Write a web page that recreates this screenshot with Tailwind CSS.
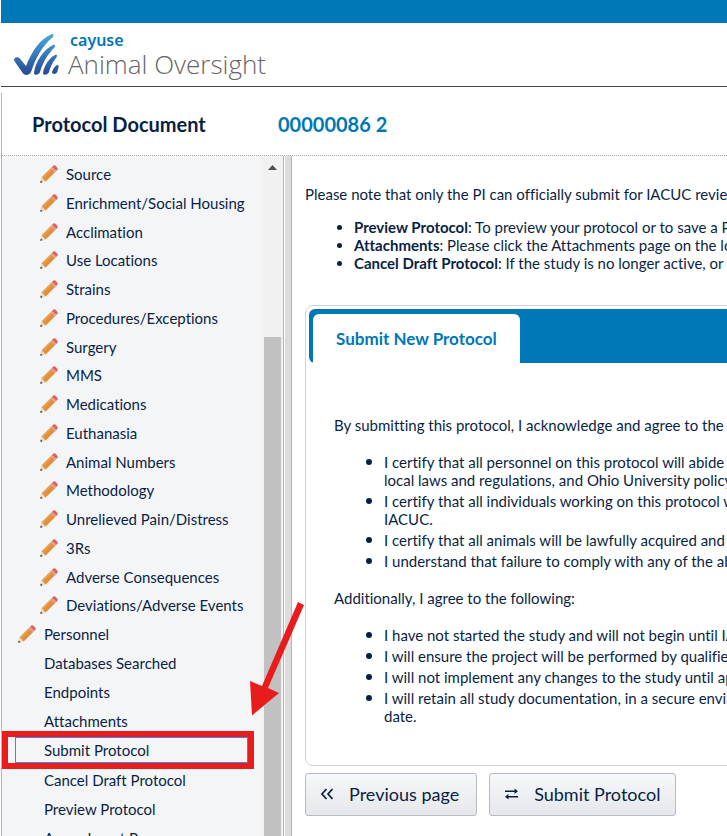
<!DOCTYPE html>
<html lang="en">
<head>
  <meta charset="UTF-8">
  <meta name="viewport" content="width=device-width, initial-scale=1.0">
  <title>Cayuse Animal Oversight</title>
  <script src="https://cdn.jsdelivr.net/npm/@tailwindcss/browser@4"></script>
</head>
<body class="h-screen overflow-hidden flex flex-col pl-px bg-white font-['Lato',sans-serif] [font-variant-ligatures:none] text-[15px] leading-[18px] text-[#0a1f44]">

  <!-- Shared icons -->
  <svg class="absolute size-0">
    <defs>
      <linearGradient id="wood" x1="0" y1="0" x2="1" y2="1">
        <stop offset="0.35" stop-color="#eba558" />
        <stop offset="0.5" stop-color="#e0903c" />
      </linearGradient>
      <linearGradient id="brand" x1="0" y1="0" x2="0" y2="42" gradientUnits="userSpaceOnUse">
        <stop offset="0" stop-color="#48aee6" />
        <stop offset="1" stop-color="#2a4b93" />
      </linearGradient>
    </defs>
    <symbol id="pencil" viewBox="0 0 18 18">
      <path d="M0.2 17.8 L1.4 12.3 L5.7 16.6 Z" fill="#f1d9bd" />
      <path d="M0.2 17.8 L0.8 15.4 L2.6 17.2 Z" fill="#333" />
      <path d="M1.4 12.3 L10.7 3 L15 7.3 L5.7 16.6 Z" fill="url(#wood)" />
      <path d="M10.7 3 L12 1.700 L16.3 6 L15 7.3 Z" fill="#d99a90" />
      <path d="M12 1.700 L13.4 0.500 Q14.4 0 15.200 0.6 L17.4 2.8 Q18 3.6 17.5 4.6 L16.3 6 Z" fill="#e2605c" />
    </symbol>
  </svg>

  <div class="h-[23px] shrink-0 bg-[#0077b6]"></div>

  <header class="h-16 shrink-0 flex items-start pl-3 pt-2 gap-2 border-b border-[#484848]">
    <svg class="w-[46px] h-[46px] mt-px" viewBox="0 0 46 46" fill="url(#brand)">
      <path d="M1 28 C1 25 6 24 8 28 L13 34 C19 19 27 7 39 2 C41 2 41 4 39 6 C30 13 23 25 18 40 C16 44 11 44 9 40 L2 30 Z" />
      <path d="M21 41 C22 30 31 17 40 13 C43 12 42 15 41 16 C35 22 30 30 27 40 C26 43 21 44 21 41 Z" />
      <path d="M30 41 C31 34 36 26 42 23 C45 22 44 25 43 26 C39 31 37 36 36 40 C35 43 30 44 30 41 Z" />
      <path d="M39 41 C39 38 42 34 44 33 C46 33 46 35 45 37 C45 40 43 42 41 42 Z" />
    </svg>
    <div>
      <div class="font-['Noto_Sans',sans-serif] font-semibold text-base leading-[18px] pl-[3px] text-[#0077b6]">cayuse</div>
      <div class="font-['Open_Sans',sans-serif] font-light text-[26px] leading-[30px] pl-px text-[#666]">Animal Oversight</div>
    </div>
  </header>

  <div class="flex-1 min-h-0 mt-[6px] flex flex-col border-l border-[#b5b5b5]">
    <div class="h-[63px] shrink-0 flex items-center pl-[30px] text-xl font-bold border-b border-dotted border-[#aaa]">
      <h1 class="w-[246px]">Protocol Document</h1>
      <span class="text-[#0077b6]">00000086 2</span>
    </div>

    <div class="flex-1 min-h-0 flex">
      <!-- Sections -->
      <nav class="w-[260px] shrink-0 bg-[#f4f5f7] pt-[3px]">
        <ul>
          <li>
            <ul class="*:h-[29px] *:nth-[4n]:h-7">
              <li><a href="#" class="flex items-center h-full pl-[38px] gap-2"><svg class="size-[18px]"><use href="#pencil" /></svg>Source</a></li>
              <li><a href="#" class="flex items-center h-full pl-[38px] gap-2"><svg class="size-[18px]"><use href="#pencil" /></svg>Enrichment/Social Housing</a></li>
              <li><a href="#" class="flex items-center h-full pl-[38px] gap-2"><svg class="size-[18px]"><use href="#pencil" /></svg>Acclimation</a></li>
              <li><a href="#" class="flex items-center h-full pl-[38px] gap-2"><svg class="size-[18px]"><use href="#pencil" /></svg>Use Locations</a></li>
              <li><a href="#" class="flex items-center h-full pl-[38px] gap-2"><svg class="size-[18px]"><use href="#pencil" /></svg>Strains</a></li>
              <li><a href="#" class="flex items-center h-full pl-[38px] gap-2"><svg class="size-[18px]"><use href="#pencil" /></svg>Procedures/Exceptions</a></li>
              <li><a href="#" class="flex items-center h-full pl-[38px] gap-2"><svg class="size-[18px]"><use href="#pencil" /></svg>Surgery</a></li>
              <li><a href="#" class="flex items-center h-full pl-[38px] gap-2"><svg class="size-[18px]"><use href="#pencil" /></svg>MMS</a></li>
              <li><a href="#" class="flex items-center h-full pl-[38px] gap-2"><svg class="size-[18px]"><use href="#pencil" /></svg>Medications</a></li>
              <li><a href="#" class="flex items-center h-full pl-[38px] gap-2"><svg class="size-[18px]"><use href="#pencil" /></svg>Euthanasia</a></li>
              <li><a href="#" class="flex items-center h-full pl-[38px] gap-2"><svg class="size-[18px]"><use href="#pencil" /></svg>Animal Numbers</a></li>
              <li><a href="#" class="flex items-center h-full pl-[38px] gap-2"><svg class="size-[18px]"><use href="#pencil" /></svg>Methodology</a></li>
              <li><a href="#" class="flex items-center h-full pl-[38px] gap-2"><svg class="size-[18px]"><use href="#pencil" /></svg>Unrelieved Pain/Distress</a></li>
              <li><a href="#" class="flex items-center h-full pl-[38px] gap-2"><svg class="size-[18px]"><use href="#pencil" /></svg>3Rs</a></li>
              <li><a href="#" class="flex items-center h-full pl-[38px] gap-2"><svg class="size-[18px]"><use href="#pencil" /></svg>Adverse Consequences</a></li>
              <li><a href="#" class="flex items-center h-full pl-[38px] gap-2"><svg class="size-[18px]"><use href="#pencil" /></svg>Deviations/Adverse Events</a></li>
            </ul>
          </li>
          <li><a href="#" class="flex items-center h-[29px] pl-4 gap-2"><svg class="size-[18px]"><use href="#pencil" /></svg>Personnel</a></li>
          <li><a href="#" class="flex items-center h-[29px] pl-[42px]">Databases Searched</a></li>
          <li><a href="#" class="flex items-center h-[29px] pl-[42px]">Endpoints</a></li>
          <li><a href="#" class="flex items-center h-[29px] pl-[42px]">Attachments</a></li>
          <li class="relative py-[2px] pl-[13px] pr-[14px]">
            <a href="#" class="flex items-center h-[26px] pl-7 border border-[#4285e8]">Submit Protocol</a>
            <!-- Callout -->
            <div class="absolute left-0 -top-1 w-[252px] h-[38px] border-[6px] border-[#e81c1c]"></div>
            <svg class="absolute left-[246px] -top-[135px] z-10 w-[60px] h-[116px]" viewBox="248 600 60 116" fill="#e81c1c">
              <path d="M298 602 L304 605 L268 688 L279 693 L252 715.500 L250 681 L262 686 Z" />
            </svg>
          </li>
          <li><a href="#" class="flex items-center h-[29px] pl-[42px]">Cancel Draft Protocol</a></li>
          <li><a href="#" class="flex items-center h-[29px] pl-[42px]">Preview Protocol</a></li>
          <li><a href="#" class="flex items-center h-[29px] pl-[42px]">Amendment Process</a></li>
        </ul>
      </nav>

      <!-- Scrollbar -->
      <div class="w-[22px] shrink-0 flex flex-col items-center bg-[#f1f1f1] border-r border-[#b5b5b5] px-[2px]">
        <svg class="w-[9px] h-[5px] mt-[9px] mb-[167px] shrink-0" viewBox="0 0 9 5"><path d="M0 5 L4.500 0 L9 5 Z" fill="#505050" /></svg>
        <div class="w-full flex-1 bg-[#c1c1c1]"></div>
      </div>
      <div class="w-[7px] shrink-0 ml-px bg-[#dcdcdc] border-r border-[#b5b5b5]"></div>

      <main class="flex-1 min-w-0 overflow-hidden pl-[13px] pt-[29px] whitespace-nowrap">
        <p>Please note that only the PI can officially submit for IACUC review</p>
        <ul class="list-disc pl-[49px] mt-[15px]">
          <li><b>Preview Protocol</b>: To preview your protocol or to save a PDF</li>
          <li><b>Attachments</b>: Please click the Attachments page on the lower</li>
          <li><b>Cancel Draft Protocol</b>: If the study is no longer active, or should</li>
        </ul>

        <section class="w-[150%] mt-[33px] p-[3px] pb-[37px] border border-[#d3d3d3] rounded-lg">
          <div class="h-[54px] flex pl-1 pt-[5px] bg-[#0077b6] rounded-md">
            <button type="button" class="px-[23px] bg-white rounded-t-md text-[17px] font-bold text-[#0077b6]">Submit New Protocol</button>
          </div>
          <div class="pl-[25px] pt-[53px]">
            <p>By submitting this protocol, I acknowledge and agree to the following:</p>
            <ul class="mt-[19px] pl-8 *:flex *:gap-3 *:mb-[3px]">
              <li><span class="size-[6px] mt-[6px] rounded-full bg-[#0a1f44]"></span><span>I certify that all personnel on this protocol will abide by<br>local laws and regulations, and Ohio University policy</span></li>
              <li><span class="size-[6px] mt-[6px] rounded-full bg-[#0a1f44]"></span><span>I certify that all individuals working on this protocol will<br>IACUC.</span></li>
              <li><span class="size-[6px] mt-[6px] rounded-full bg-[#0a1f44]"></span><span>I certify that all animals will be lawfully acquired and that</span></li>
              <li><span class="size-[6px] mt-[6px] rounded-full bg-[#0a1f44]"></span><span>I understand that failure to comply with any of the above</span></li>
            </ul>
            <p class="mt-[19px]">Additionally, I agree to the following:</p>
            <ul class="mt-[19px] pl-8 *:flex *:gap-3 *:mb-[3px]">
              <li><span class="size-[6px] mt-[6px] rounded-full bg-[#0a1f44]"></span><span>I have not started the study and will not begin until IACUC</span></li>
              <li><span class="size-[6px] mt-[6px] rounded-full bg-[#0a1f44]"></span><span>I will ensure the project will be performed by qualified</span></li>
              <li><span class="size-[6px] mt-[6px] rounded-full bg-[#0a1f44]"></span><span>I will not implement any changes to the study until approved</span></li>
              <li><span class="size-[6px] mt-[6px] rounded-full bg-[#0a1f44]"></span><span>I will retain all study documentation, in a secure environment<br>date.</span></li>
            </ul>
          </div>
        </section>

        <div class="flex gap-3 mt-[7px] text-lg">
          <button type="button" class="h-[43px] flex items-center gap-4 pl-[15px] pr-[17px] pb-px border border-[#b9bac4] rounded-[3px] bg-linear-to-b from-[#f7f8fa] to-[#e6e7ec]">
            <svg class="size-3" viewBox="0 0 12 12" fill="none" stroke="#0a1f44" stroke-width="1.700"><path d="M5.500 1 L1 6 L5.500 11 M11.500 1 L7 6 L11.500 11" /></svg>
            Previous page
          </button>
          <button type="button" class="h-[43px] flex items-center gap-4 px-[15px] pb-px border border-[#b9bac4] rounded-[3px] bg-linear-to-b from-[#f7f8fa] to-[#e6e7ec]">
            <svg class="w-[13px] h-3" viewBox="0 0 13 12" fill="#0a1f44"><path d="M0 2.500 H9.500 V0.500 L13 3.200 L9.500 6 V4 H0 Z M13 8 H3.500 V6 L0 8.800 L3.500 11.500 V9.500 H13 Z" /></svg>
            Submit Protocol
          </button>
        </div>
      </main>
    </div>
  </div>
</body>
</html>
